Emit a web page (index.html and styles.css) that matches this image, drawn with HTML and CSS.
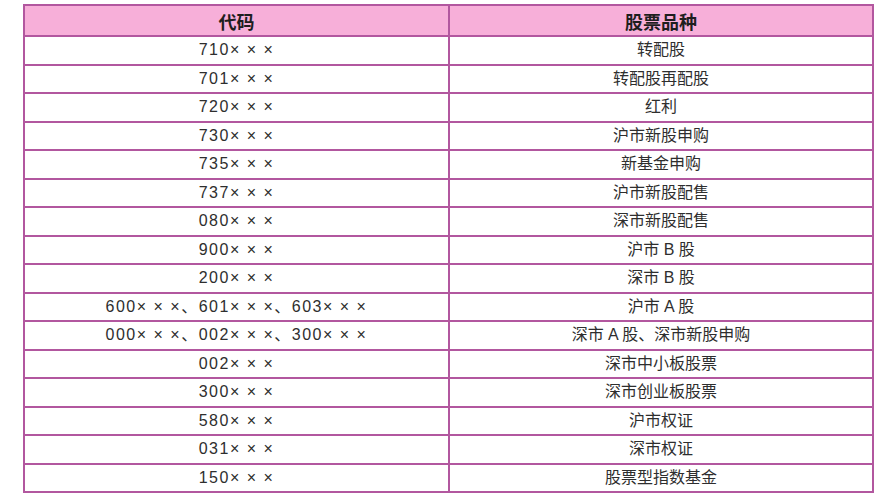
FILE: index.html
```html
<!DOCTYPE html>
<html lang="zh">
<head>
<meta charset="utf-8">
<link rel="stylesheet" href="styles.css">
</head>
<body>
<table class="codes">
  <thead>
    <tr><th class="col-code">代码</th><th class="col-kind">股票品种</th></tr>
  </thead>
  <tbody>
    <tr><td>710× × ×</td><td>转配股</td></tr>
    <tr><td>701× × ×</td><td>转配股再配股</td></tr>
    <tr><td>720× × ×</td><td>红利</td></tr>
    <tr><td>730× × ×</td><td>沪市新股申购</td></tr>
    <tr><td>735× × ×</td><td>新基金申购</td></tr>
    <tr><td>737× × ×</td><td>沪市新股配售</td></tr>
    <tr><td>080× × ×</td><td>深市新股配售</td></tr>
    <tr><td>900× × ×</td><td>沪市 B 股</td></tr>
    <tr><td>200× × ×</td><td>深市 B 股</td></tr>
    <tr><td>600× × ×、601× × ×、603× × ×</td><td>沪市 A 股</td></tr>
    <tr><td>000× × ×、002× × ×、300× × ×</td><td>深市 A 股、深市新股申购</td></tr>
    <tr><td>002× × ×</td><td>深市中小板股票</td></tr>
    <tr><td>300× × ×</td><td>深市创业板股票</td></tr>
    <tr><td>580× × ×</td><td>沪市权证</td></tr>
    <tr><td>031× × ×</td><td>深市权证</td></tr>
    <tr><td>150× × ×</td><td>股票型指数基金</td></tr>
  </tbody>
</table>
</body>
</html>
```

FILE: styles.css
```css
html, body {
  margin: 0;
  padding: 0;
  background: #ffffff;
}
body {
  padding: 4px 0 0 23px;
  font-family: "Liberation Sans", "Noto Sans CJK SC", sans-serif;
  color: #2e2e2e;
}
.codes {
  border-collapse: collapse;
  width: 845px;
  table-layout: fixed;
}
.codes th, .codes td {
  border: 2px solid #b2579f;
  text-align: center;
  padding: 0;
  vertical-align: middle;
}
.codes th {
  background: #f7afd9;
  height: 29px;
  font-size: 18px;
  font-weight: bold;
  font-family: "Noto Sans CJK SC", sans-serif;
  color: #1e1e1e;
}
.codes td {
  height: 26.5px;
  font-size: 16px;
  line-height: 1;
}
.codes td:first-child {
  letter-spacing: 1.5px;
}
.col-code { width: 423px; }
.col-kind { width: 422px; }
```
